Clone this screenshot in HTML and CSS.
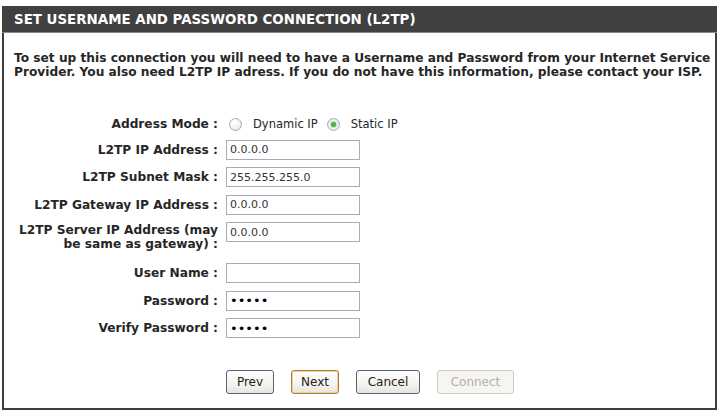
FILE: index.html
```html
<!DOCTYPE html>
<html>
<head>
<meta charset="utf-8">
<title>L2TP Connection</title>
<link rel="stylesheet" href="styles.css">
</head>
<body>
<div class="panel">
  <div class="head">SET USERNAME AND PASSWORD CONNECTION (L2TP)</div>
  <p class="intro">To set up this connection you will need to have a Username and Password from your Internet Service<br>Provider. You also need L2TP IP adress. If you do not have this information, please contact your ISP.</p>
  <form class="form">
    <div class="lbl row-mode">Address Mode :</div>
    <div class="field row-mode radios">
      <label class="opt"><input type="radio" name="mode" class="radio"> Dynamic IP</label>
      <label class="opt"><input type="radio" name="mode" class="radio" checked> Static IP</label>
    </div>

    <div class="lbl">L2TP IP Address :</div>
    <div class="field"><input class="txt" type="text" value="0.0.0.0"></div>

    <div class="lbl">L2TP Subnet Mask :</div>
    <div class="field"><input class="txt" type="text" value="255.255.255.0"></div>

    <div class="lbl">L2TP Gateway IP Address :</div>
    <div class="field"><input class="txt" type="text" value="0.0.0.0"></div>

    <div class="lbl lbl-top tall">L2TP Server IP Address (may<br>be same as gateway) :</div>
    <div class="field field-top tall"><input class="txt" type="text" value="0.0.0.0"></div>

    <div class="lbl">User Name :</div>
    <div class="field"><input class="txt" type="text" value=""></div>

    <div class="lbl">Password :</div>
    <div class="field"><input class="txt pw" type="password" value="12345"></div>

    <div class="lbl">Verify Password :</div>
    <div class="field"><input class="txt pw" type="password" value="12345"></div>

    <div class="field buttons">
      <button type="button" class="btn w48">Prev</button>
      <button type="button" class="btn w48 btn-default">Next</button>
      <button type="button" class="btn w64">Cancel</button>
      <button type="button" class="btn w77" disabled>Connect</button>
    </div>
  </form>
</div>
</body>
</html>
```

FILE: styles.css
```css
html, body {
  margin: 0;
  background: #fff;
}
body {
  padding: 6px 3px 0 2px;
  font-family: "DejaVu Sans", Verdana, sans-serif;
  color: #262626;
}
.panel {
  width: 711px;
  height: 402px;
  border: 2px solid #3e3e3e;
  border-top: 0;
}
.head {
  background: #404040;
  color: #fff;
  font-weight: bold;
  font-size: 13.4px;
  height: 26px;
  line-height: 27px;
  border-bottom: 1px solid #8a8a8a;
  margin: 0 -2px;
  padding-left: 12px;
  white-space: nowrap;
}
.intro {
  margin: 18px 0 0 0;
  padding-left: 10px;
  font-size: 12.2px;
  font-weight: bold;
  line-height: 14px;
  white-space: nowrap;
}
.form {
  display: grid;
  grid-template-columns: 204px 134px;
  column-gap: 8px;
  row-gap: 7.6px;
  margin: 37px 0 0 10px;
}
.lbl {
  font-size: 12.2px;
  font-weight: bold;
  text-align: right;
  display: flex;
  align-items: center;
  justify-content: flex-end;
  white-space: nowrap;
  height: 20px;
}
.row-mode {
  height: 16px;
}
.lbl.tall {
  height: 32px;
}
.lbl-top {
  align-items: flex-start;
  line-height: 14px;
  margin-top: 1px;
}
.field {
  display: flex;
  align-items: center;
  height: 20px;
}
.field.tall {
  height: 32px;
}
.field.row-mode {
  height: 16px;
}
.field-top {
  align-items: flex-start;
}
.radios {
  white-space: nowrap;
  font-size: 11.5px;
  overflow: visible;
}
.opt {
  display: inline-flex;
  align-items: center;
  margin-right: 6px;
}
.radio {
  appearance: none;
  -webkit-appearance: none;
  width: 13px;
  height: 13px;
  margin: 0 11px 0 3px;
  border-radius: 50%;
  border: 1px solid #9fb0c2;
  background: radial-gradient(circle at 40% 35%, #ffffff 0%, #f1f1ee 55%, #dcdcd6 100%);
  box-sizing: border-box;
}
.radio:checked {
  background: radial-gradient(circle, #4fae4a 0, #62b95c 2.5px, #d8ecd4 3.2px, #f3f3ef 4px, #dcdcd6 100%);
}
.txt {
  box-sizing: border-box;
  width: 134px;
  height: 20px;
  border: 1px solid #a6adb6;
  padding: 0 3px;
  margin: 0;
  font-family: "DejaVu Sans", Verdana, sans-serif;
  font-size: 11px;
  color: #333;
  background: #fff;
  outline: none;
}
.pw {
  font-size: 13px;
  letter-spacing: 0;
  color: #000;
}
.buttons {
  grid-column: 2;
  margin-top: 24px;
  height: 24px;
  gap: 17px;
  overflow: visible;
  white-space: nowrap;
}
.btn {
  flex: none;
  box-sizing: border-box;
  height: 24px;
  padding: 0;
  border: 1px solid #53627d;
  border-radius: 3px;
  background: linear-gradient(#ffffff, #f4f3ee 60%, #e6e5dd);
  font-family: "DejaVu Sans", Verdana, sans-serif;
  font-size: 12px;
  color: #222;
}
.btn-default {
  border-color: #a7803f;
  box-shadow: inset 0 0 0 1px #f8cf92;
}
.btn:disabled {
  border-color: #cfcdc4;
  background: #f6f5f1;
  color: #b2b0a7;
}
.w48 { width: 48px; }
.w64 { width: 64px; }
.w77 { width: 77px; }
```
